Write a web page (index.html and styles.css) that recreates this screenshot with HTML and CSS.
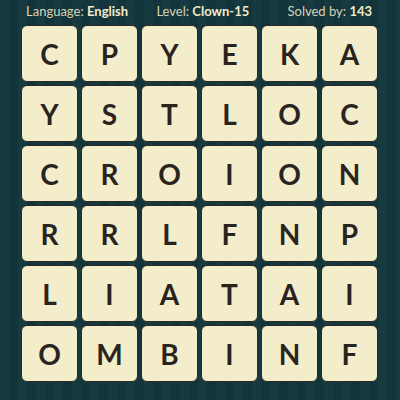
FILE: index.html
```html
<!DOCTYPE html>
<html>
<head>
<meta charset="utf-8">
<link rel="stylesheet" href="styles.css">
</head>
<body>
<div class="page">
  <div class="header">
    <div class="stat lang">Language: <b>English</b></div>
    <div class="stat level">Level: <b>Clown-15</b></div>
    <div class="stat solved">Solved by: <b>143</b></div>
  </div>
  <div class="grid">
    <div class="tile">C</div><div class="tile">P</div><div class="tile">Y</div><div class="tile">E</div><div class="tile">K</div><div class="tile">A</div>
    <div class="tile">Y</div><div class="tile">S</div><div class="tile">T</div><div class="tile">L</div><div class="tile">O</div><div class="tile">C</div>
    <div class="tile">C</div><div class="tile">R</div><div class="tile">O</div><div class="tile">I</div><div class="tile">O</div><div class="tile">N</div>
    <div class="tile">R</div><div class="tile">R</div><div class="tile">L</div><div class="tile">F</div><div class="tile">N</div><div class="tile">P</div>
    <div class="tile">L</div><div class="tile">I</div><div class="tile">A</div><div class="tile">T</div><div class="tile">A</div><div class="tile">I</div>
    <div class="tile">O</div><div class="tile">M</div><div class="tile">B</div><div class="tile">I</div><div class="tile">N</div><div class="tile">F</div>
  </div>
</div>
</body>
</html>
```
FILE: styles.css
```css
html, body {
  margin: 0;
  padding: 0;
}
body {
  width: 400px;
  height: 400px;
  overflow: hidden;
  background-color: #163a40;
  background-image: repeating-linear-gradient(90deg, #163a40 0px, #163a40 9px, #12343a 9px, #12343a 18px);
  font-family: Lato, "Open Sans", sans-serif;
}
.page {
  display: flex;
  flex-direction: column;
}
.header {
  height: 25px;
  display: flex;
  align-items: center;
  padding: 0 28px 2px 26px;
  justify-content: space-between;
  font-size: 13px;
  color: #d6d3b8;
  line-height: 1;
  box-sizing: border-box;
}
.level {
  margin-right: 10px;
}
.stat b {
  color: #f1ebcc;
  font-weight: 700;
}
.grid {
  margin-left: 21px;
  display: grid;
  grid-template-columns: repeat(6, 57px);
  grid-auto-rows: 57px;
  gap: 3px;
}
.tile {
  box-sizing: border-box;
  background: #f3edcb;
  border: 1px solid #2a2a22;
  border-radius: 6px;
  display: flex;
  align-items: center;
  justify-content: center;
  font-size: 28px;
  font-weight: 700;
  color: #2a241f;
  padding-top: 1px;
}
```
